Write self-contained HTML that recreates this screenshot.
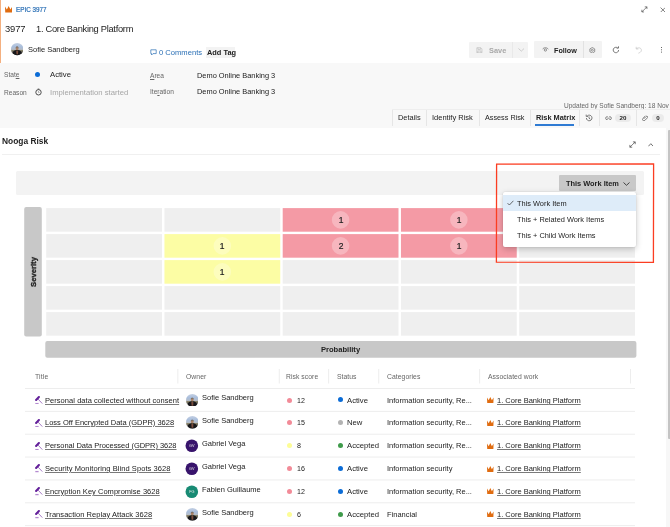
<!DOCTYPE html>
<html>
<head>
<meta charset="utf-8">
<title>Epic 3977</title>
<style>
html,body{margin:0;padding:0;}
body{width:670px;height:527px;position:relative;overflow:hidden;background:#fff;font-family:"Liberation Sans",sans-serif;color:#222;}
.a{position:absolute;}
.t{position:absolute;white-space:nowrap;will-change:transform;line-height:12px;height:12px;font-size:8px;color:#222;}
.b{font-weight:bold;}
.g{color:#666;}
.u{text-decoration:underline;text-decoration-thickness:0.5px;text-underline-offset:1px;text-decoration-color:rgba(40,40,40,0.62);}
.dot{position:absolute;width:5px;height:5px;border-radius:50%;}
</style>
</head>
<body>
<!-- header -->
<div class="a" style="left:0;top:0;width:1.2px;height:62.8px;background:#f4b080;"></div>
<div class="a" id="greyband" style="left:0;top:62.8px;width:670px;height:65px;background:#f8f8f8;"></div>

<svg class="a" style="left:4.9px;top:6.4px" width="7.3" height="6.6" viewBox="0 0 7.4 6.6"><path d="M0 0.4 L0.25 6.6 H7.15 L7.4 0.4 L5.5 3.5 L3.7 0 L1.9 3.5 Z" fill="#e06c10"/></svg>
<span class="t" style="left:15.5px;top:3.5px;font-size:6.3px;color:#2a6fb5;-webkit-text-stroke:0.2px #2a6fb5;">EPIC 3977</span>
<span class="t" style="left:5px;top:23.2px;font-size:9.4px;letter-spacing:-0.1px;">3977</span>
<span class="t" style="left:36px;top:23.2px;font-size:9.3px;letter-spacing:-0.28px;">1. Core Banking Platform</span>

<svg class="a" style="left:10.9px;top:43.4px" width="12.4" height="12.4" viewBox="0 0 24 24"><defs><clipPath id="c0"><circle cx="12" cy="12" r="12"/></clipPath><linearGradient id="g0" x1="0" y1="0" x2="0" y2="1"><stop offset="0" stop-color="#c3cfe2"/><stop offset="0.3" stop-color="#a9bedc"/><stop offset="0.52" stop-color="#b4bcc8"/><stop offset="0.58" stop-color="#8c866c"/><stop offset="0.7" stop-color="#6e6a5c"/><stop offset="1" stop-color="#8a8a8a"/></linearGradient></defs><g clip-path="url(#c0)"><rect width="24" height="24" fill="url(#g0)"/><path d="M2.5 22 C3 15.5 7 13.6 12 13.6 C17 13.6 21 15.5 21.5 22 L21.5 24 H2.5 Z" fill="#17171a"/><path d="M10 15 L14 15 L13.6 22 L10.6 22 Z" fill="#7a4d3c"/><ellipse cx="11.8" cy="10.6" rx="2.7" ry="3.6" fill="#a98266"/><path d="M9 9.6 C9 6 14.6 6 14.6 9.6 C13.6 8 10 8 9 9.6 Z" fill="#6c6862"/></g></svg>
<span class="t" style="left:28px;top:43.7px;font-size:7.5px;">Sofie Sandberg</span>

<svg class="a" style="left:150px;top:48.7px" width="7" height="7" viewBox="0 0 7 7"><path d="M0.8 0.8 H6.2 V4.6 H3 L1.6 6 V4.6 H0.8 Z" fill="none" stroke="#2a6fb5" stroke-width="0.7"/></svg>
<span class="t" style="left:159px;top:47px;font-size:7.6px;color:#2a6fb5;">0 Comments</span>
<div class="a" style="left:205.5px;top:47.2px;width:29.5px;height:10.8px;background:#f3f3f3;"></div>
<span class="t b" style="left:206.5px;top:47px;font-size:7.4px;">Add Tag</span>

<!-- toolbar buttons -->
<div class="a" style="left:469px;top:42px;width:59.3px;height:16.1px;background:#f3f3f3;border-radius:1px;"></div>
<div class="a" style="left:512px;top:42px;width:0.8px;height:16.1px;background:#e9e9e9;"></div>
<svg class="a" style="left:476px;top:46.6px" width="6.8" height="6.6" viewBox="0 0 7 7"><path d="M0.8 0.8 H5 L6.2 2 V6.2 H0.8 Z M2 0.8 V2.6 H4.6 V0.8 M1.8 6.2 V4.2 H5.2 V6.2" fill="none" stroke="#b4b4b4" stroke-width="0.6"/></svg>
<span class="t b" style="left:489px;top:44.6px;font-size:7.4px;color:#a8a8a8;">Save</span>
<svg class="a" style="left:517.5px;top:48.4px" width="6.6" height="3.8" viewBox="0 0 7 4"><path d="M0.5 0.5 L3.5 3.3 L6.5 0.5" fill="none" stroke="#b0b0b0" stroke-width="0.6"/></svg>

<div class="a" style="left:534px;top:41.1px;width:67.7px;height:17.3px;background:#f3f3f3;border-radius:1px;"></div>
<div class="a" style="left:583px;top:41.1px;width:0.9px;height:17.3px;background:#e2e2e2;"></div>
<svg class="a" style="left:541.8px;top:47.2px" width="6.8" height="5" viewBox="0 0 6.8 5"><path d="M0.4 2.3 C1.8 0.2 5 0.2 6.4 2.3" fill="none" stroke="#555" stroke-width="0.6"/><circle cx="3.4" cy="3" r="1.15" fill="none" stroke="#555" stroke-width="0.6"/></svg>
<span class="t b" style="left:554px;top:44.6px;font-size:7.2px;">Follow</span>
<svg class="a" style="left:589.4px;top:46.7px" width="6.6" height="6.6" viewBox="0 0 6.6 6.6"><path d="M3.3 0.5 L5.7 1.9 V4.7 L3.3 6.1 L0.9 4.7 V1.9 Z" fill="none" stroke="#555" stroke-width="0.6" stroke-linejoin="round"/><circle cx="3.3" cy="3.3" r="1" fill="none" stroke="#555" stroke-width="0.55"/></svg>
<svg class="a" style="left:612px;top:46.1px" width="8" height="8" viewBox="0 0 8 8"><path d="M6.6 4 A2.7 2.7 0 1 1 5.6 1.9" fill="none" stroke="#444" stroke-width="0.7"/><path d="M4.6 2.1 H6.5 V0.3" fill="none" stroke="#444" stroke-width="0.7"/></svg>
<svg class="a" style="left:635px;top:46.1px" width="8" height="8" viewBox="0 0 8 8"><path d="M1.2 0.8 V3 H3.4 M1.3 3 C2.6 1.2 6.4 1.4 6.4 4.2 C6.4 6 4.6 6.6 3.4 7.2" fill="none" stroke="#c4c4c4" stroke-width="0.7"/></svg>
<div class="a" style="left:660.7px;top:47px;width:1px;height:1px;background:#666;box-shadow:0 2.3px 0 #666,0 4.6px 0 #666;"></div>

<!-- window controls -->
<svg class="a" style="left:641.2px;top:6px" width="6.8" height="6.8" viewBox="0 0 8 8"><path d="M1 7 L7 1 M4.4 1 H7 V3.6 M1 4.4 V7 H3.6" fill="none" stroke="#444" stroke-width="0.75"/></svg>
<svg class="a" style="left:659.6px;top:6.6px" width="5.8" height="5.8" viewBox="0 0 7 7"><path d="M0.7 0.7 L6.3 6.3 M6.3 0.7 L0.7 6.3" fill="none" stroke="#444" stroke-width="0.8"/></svg>

<!-- fields -->
<span class="t g" style="left:4px;top:69.1px;font-size:6.6px;">Stat<u>e</u></span>
<div class="dot" style="left:34.6px;top:72.2px;background:#0b6cd6;"></div>
<span class="t" style="left:49.5px;top:69.1px;font-size:7.7px;">Active</span>
<span class="t g" style="left:4px;top:87px;font-size:6.6px;">Reason</span>
<svg class="a" style="left:35px;top:88px" width="7" height="8" viewBox="0 0 7 8"><circle cx="3.5" cy="4.3" r="2.7" fill="none" stroke="#444" stroke-width="0.95"/><path d="M2.7 1.1 H4.3" fill="none" stroke="#444" stroke-width="0.9"/><path d="M3.5 3 V4.5 H4.5" fill="none" stroke="#777" stroke-width="0.55"/></svg>
<span class="t" style="left:49.5px;top:87.4px;font-size:7.7px;color:#a6a6a6;">Implementation started</span>

<span class="t g" style="left:150px;top:69.7px;font-size:6.6px;"><u>A</u>rea</span>
<span class="t" style="left:197px;top:69.7px;font-size:7.41px;">Demo Online Banking 3</span>
<span class="t g" style="left:150px;top:85.5px;font-size:6.6px;">Ite<u>r</u>ation</span>
<span class="t" style="left:197px;top:85.5px;font-size:7.41px;">Demo Online Banking 3</span>

<span class="t g" style="right:1px;top:100px;font-size:6.55px;">Updated by Sofie Sandberg: 18 Nov</span>

<!-- tabs -->
<div class="a" style="left:391.5px;top:109.5px;width:1px;height:16px;background:#e6e6e6;"></div>
<div class="a" style="left:426px;top:109.5px;width:1px;height:16px;background:#e6e6e6;"></div>
<div class="a" style="left:479px;top:109.5px;width:1px;height:16px;background:#e6e6e6;"></div>
<div class="a" style="left:530.2px;top:109.5px;width:1px;height:16px;background:#e6e6e6;"></div>
<div class="a" style="left:578.8px;top:109.5px;width:1px;height:16px;background:#e6e6e6;"></div>
<div class="a" style="left:599px;top:109.5px;width:1px;height:16px;background:#e6e6e6;"></div>
<div class="a" style="left:635.7px;top:109.5px;width:1px;height:16px;background:#e6e6e6;"></div>
<div class="a" style="left:392px;top:109px;width:278px;height:1px;background:#eeeeee;"></div>
<span class="t" style="left:398.4px;top:112px;font-size:7.4px;">Details</span>
<span class="t" style="left:432.3px;top:112px;font-size:7.5px;">Identify Risk</span>
<span class="t" style="left:485.3px;top:112px;font-size:7.25px;">Assess Risk</span>
<span class="t b" style="left:535.5px;top:112px;font-size:7.36px;">Risk Matrix</span>
<div class="a" style="left:535.4px;top:124.3px;width:38.6px;height:1.4px;background:#2f7bd3;"></div>
<svg class="a" style="left:585px;top:114px" width="8" height="8" viewBox="0 0 8 8"><path d="M1.4 4 A2.8 2.8 0 1 0 2.3 1.9" fill="none" stroke="#444" stroke-width="0.7"/><path d="M1.2 0.6 V2.4 H3 M4 2.4 V4.2 L5.2 5" fill="none" stroke="#444" stroke-width="0.7"/></svg>
<svg class="a" style="left:604.7px;top:115.8px" width="7" height="4.4" viewBox="0 0 8 5"><path d="M3.2 0.8 H2.4 A1.7 1.7 0 0 0 2.4 4.2 H3.2 M4.8 0.8 H5.6 A1.7 1.7 0 0 1 5.6 4.2 H4.8 M2.6 2.5 H5.4" fill="none" stroke="#444" stroke-width="0.7"/></svg>
<div class="a" style="left:615.2px;top:113.5px;width:16px;height:8.5px;border-radius:4.3px;background:#ebebeb;"></div>
<span class="t b" style="left:615.2px;width:16px;text-align:center;top:111.8px;font-size:6.2px;">20</span>
<svg class="a" style="left:641.8px;top:114.5px" width="6.6" height="6.6" viewBox="0 0 8 8"><path d="M2.2 4.6 L5 1.8 A1.1 1.1 0 0 1 6.6 3.4 L3.4 6.6 A1.7 1.7 0 0 1 1 4.2 L4 1.2" fill="none" stroke="#444" stroke-width="0.8"/></svg>
<div class="a" style="left:651.8px;top:113.5px;width:12px;height:8.5px;border-radius:4.3px;background:#ebebeb;"></div>
<span class="t b" style="left:651.8px;width:12px;text-align:center;top:111.8px;font-size:6.2px;">0</span>

<!-- section -->
<span class="t b" style="left:2px;top:135px;font-size:8.4px;">Nooga Risk</span>
<svg class="a" style="left:629.2px;top:141.4px" width="7.1" height="7.1" viewBox="0 0 8 8"><path d="M1 7 L7 1 M4.4 1 H7 V3.6 M1 4.4 V7 H3.6" fill="none" stroke="#444" stroke-width="0.8"/></svg>
<svg class="a" style="left:647.8px;top:143px" width="5.6" height="3.6" viewBox="0 0 5.6 3.6"><path d="M0.4 3.3 L2.8 0.7 L5.2 3.3" fill="none" stroke="#444" stroke-width="0.75"/></svg>
<div class="a" style="left:2px;top:154.2px;width:657.6px;height:1px;background:#f0f0f0;"></div>

<div class="a" id="filterbar" style="left:16px;top:171px;width:628.3px;height:24px;background:#f3f3f3;border-radius:1.5px;"></div>

<!-- matrix -->
<svg class="a" style="left:0;top:0" width="670" height="527" viewBox="0 0 670 527">
<rect x="24.2" y="207" width="17.6" height="129.5" rx="2" fill="#c8c8c8"/>
<rect x="45.3" y="341.1" width="591.1" height="16.7" rx="2" fill="#c8c8c8"/>
<rect x="46.20" y="208.10" width="115.8" height="23.6" fill="#efefef"/>
<rect x="164.45" y="208.10" width="115.8" height="23.6" fill="#efefef"/>
<rect x="282.70" y="208.10" width="115.8" height="23.6" fill="#f49aa5"/>
<circle cx="340.60" cy="219.90" r="8.8" fill="#fff" fill-opacity="0.28"/>
<rect x="400.95" y="208.10" width="115.8" height="23.6" fill="#f49aa5"/>
<circle cx="458.85" cy="219.90" r="8.8" fill="#fff" fill-opacity="0.28"/>
<rect x="519.20" y="208.10" width="115.8" height="23.6" fill="#efefef"/>
<rect x="46.20" y="234.10" width="115.8" height="23.6" fill="#efefef"/>
<rect x="164.45" y="234.10" width="115.8" height="23.6" fill="#fcfda4"/>
<circle cx="222.35" cy="245.90" r="8.8" fill="#fff" fill-opacity="0.28"/>
<rect x="282.70" y="234.10" width="115.8" height="23.6" fill="#f49aa5"/>
<circle cx="340.60" cy="245.90" r="8.8" fill="#fff" fill-opacity="0.28"/>
<rect x="400.95" y="234.10" width="115.8" height="23.6" fill="#f49aa5"/>
<circle cx="458.85" cy="245.90" r="8.8" fill="#fff" fill-opacity="0.28"/>
<rect x="519.20" y="234.10" width="115.8" height="23.6" fill="#efefef"/>
<rect x="46.20" y="260.10" width="115.8" height="23.6" fill="#efefef"/>
<rect x="164.45" y="260.10" width="115.8" height="23.6" fill="#fcfda4"/>
<circle cx="222.35" cy="271.90" r="8.8" fill="#fff" fill-opacity="0.28"/>
<rect x="282.70" y="260.10" width="115.8" height="23.6" fill="#efefef"/>
<rect x="400.95" y="260.10" width="115.8" height="23.6" fill="#efefef"/>
<rect x="519.20" y="260.10" width="115.8" height="23.6" fill="#efefef"/>
<rect x="46.20" y="286.10" width="115.8" height="23.6" fill="#efefef"/>
<rect x="164.45" y="286.10" width="115.8" height="23.6" fill="#efefef"/>
<rect x="282.70" y="286.10" width="115.8" height="23.6" fill="#efefef"/>
<rect x="400.95" y="286.10" width="115.8" height="23.6" fill="#efefef"/>
<rect x="519.20" y="286.10" width="115.8" height="23.6" fill="#efefef"/>
<rect x="46.20" y="312.10" width="115.8" height="23.6" fill="#efefef"/>
<rect x="164.45" y="312.10" width="115.8" height="23.6" fill="#efefef"/>
<rect x="282.70" y="312.10" width="115.8" height="23.6" fill="#efefef"/>
<rect x="400.95" y="312.10" width="115.8" height="23.6" fill="#efefef"/>
<rect x="519.20" y="312.10" width="115.8" height="23.6" fill="#efefef"/>
</svg>
<span class="t" style="left:330.6px;width:20px;text-align:center;top:213.9px;font-size:8.5px;-webkit-text-stroke:0.2px #222;">1</span>
<span class="t" style="left:448.8px;width:20px;text-align:center;top:213.9px;font-size:8.5px;-webkit-text-stroke:0.2px #222;">1</span>
<span class="t" style="left:212.3px;width:20px;text-align:center;top:239.9px;font-size:8.5px;-webkit-text-stroke:0.2px #222;">1</span>
<span class="t" style="left:330.6px;width:20px;text-align:center;top:239.9px;font-size:8.5px;-webkit-text-stroke:0.2px #222;">2</span>
<span class="t" style="left:448.8px;width:20px;text-align:center;top:239.9px;font-size:8.5px;-webkit-text-stroke:0.2px #222;">1</span>
<span class="t" style="left:212.3px;width:20px;text-align:center;top:265.9px;font-size:8.5px;-webkit-text-stroke:0.2px #222;">1</span>
<span class="t b" style="left:33.9px;top:272px;font-size:7.7px;-webkit-text-stroke:0.3px #222;transform:translate(-50%,-50%) rotate(-90deg);">Severity</span>






<span class="t b" style="left:45px;width:591px;text-align:center;top:344px;font-size:7.6px;">Probability</span>

<!-- dropdown -->
<div class="a" id="ddbtn" style="left:559px;top:175px;width:77px;height:16px;background:#c8c8c8;border-radius:1px;"></div>
<span class="t b" style="left:565.5px;top:177.9px;font-size:7.4px;">This Work Item</span>
<svg class="a" style="left:622.5px;top:181.8px" width="7" height="4" viewBox="0 0 7 4"><path d="M0.5 0.5 L3.5 3.3 L6.5 0.5" fill="none" stroke="#333" stroke-width="0.9"/></svg>

<div class="a" id="ddpop" style="left:503px;top:191.8px;width:133px;height:55px;background:#fff;border-radius:2px;box-shadow:0 2px 6px rgba(0,0,0,0.22),0 0 2px rgba(0,0,0,0.12);"></div>
<div class="a" style="left:503px;top:195px;width:133px;height:16.4px;background:#deecf9;"></div>
<svg class="a" style="left:507px;top:200px" width="7" height="6" viewBox="0 0 7 6"><path d="M0.6 3.2 L2.4 5 L6.4 0.8" fill="none" stroke="#444" stroke-width="0.8"/></svg>
<span class="t" style="left:516.5px;top:198.3px;font-size:7.4px;">This Work Item</span>
<span class="t" style="left:516.5px;top:214.3px;font-size:7.4px;">This + Related Work Items</span>
<span class="t" style="left:516.5px;top:230.3px;font-size:7.4px;">This + Child Work Items</span>

<!-- red annotation -->
<svg class="a" style="left:494px;top:161px" width="164" height="106" viewBox="0 0 164 106"><defs><filter id="rough" x="-2%" y="-2%" width="104%" height="104%"><feTurbulence type="fractalNoise" baseFrequency="0.55" numOctaves="2" seed="3" result="n"/><feDisplacementMap in="SourceGraphic" in2="n" scale="0.9" xChannelSelector="R" yChannelSelector="G"/></filter></defs><path d="M2.6 3.2 L159.6 2.8 L159.4 101.4 L2.4 101.2 Z" fill="none" stroke="#fb3c20" stroke-width="1.3" filter="url(#rough)"/></svg>

<!-- table -->
<span class="t g" style="left:35px;top:371px;font-size:6.8px;letter-spacing:0.15px;">Title</span>
<span class="t g" style="left:186px;top:371px;font-size:6.8px;letter-spacing:0.05px;">Owner</span>
<span class="t g" style="left:286px;top:371px;font-size:6.8px;letter-spacing:0.05px;">Risk score</span>
<span class="t g" style="left:337px;top:371px;font-size:6.8px;letter-spacing:0.05px;">Status</span>
<span class="t g" style="left:387px;top:371px;font-size:6.8px;letter-spacing:0.05px;">Categories</span>
<span class="t g" style="left:487.5px;top:371px;font-size:6.8px;letter-spacing:0.05px;">Associated work</span>


<svg class="a" style="left:0;top:0" width="670" height="527" viewBox="0 0 670 527"><rect x="177.4" y="369" width="0.9" height="14.5" fill="#ebebeb"/><rect x="278.8" y="369" width="0.9" height="14.5" fill="#ebebeb"/><rect x="328.2" y="369" width="0.9" height="14.5" fill="#ebebeb"/><rect x="378.3" y="369" width="0.9" height="14.5" fill="#ebebeb"/><rect x="479.2" y="369" width="0.9" height="14.5" fill="#ebebeb"/><rect x="630.0" y="369" width="0.9" height="14.5" fill="#ebebeb"/><rect x="25" y="388.00" width="610" height="0.9" fill="#ebebeb"/><rect x="25" y="410.87" width="610" height="0.9" fill="#ebebeb"/><rect x="25" y="433.74" width="610" height="0.9" fill="#ebebeb"/><rect x="25" y="456.61" width="610" height="0.9" fill="#ebebeb"/><rect x="25" y="479.48" width="610" height="0.9" fill="#ebebeb"/><rect x="25" y="502.35" width="610" height="0.9" fill="#ebebeb"/><rect x="25" y="525.22" width="610" height="0.9" fill="#ebebeb"/></svg>
<!-- scrollbar -->
<div class="a" style="left:666.2px;top:127.8px;width:3.8px;height:400px;background:#f7f7f7;"></div>
<div class="a" style="left:667.8px;top:129.7px;width:2.2px;height:309.1px;background:#c4c4c4;border-radius:1px 0 0 1px;"></div>

<div id="rows">
<!-- row 1 -->
<svg class="a" style="left:34.5px;top:395.8px" width="8" height="8.4" viewBox="0 0 8 8.4"><path d="M1.1 3.9 L3.9 1.1" stroke="#63209a" stroke-width="2.1" stroke-linecap="round" fill="none"/><path d="M3 3 L7.3 7.6" stroke="#a274c2" stroke-width="0.95" fill="none"/><path d="M0.3 7.6 H3.6" stroke="#b48ad0" stroke-width="1.3" fill="none"/></svg>
<span class="t u" style="left:45px;top:394.5px;font-size:7.5px;letter-spacing:0.05px;">Personal data collected without consent</span>
<svg class="a" style="left:185.5px;top:393.5px" width="12.7" height="12.7" viewBox="0 0 24 24"><defs><clipPath id="c1"><circle cx="12" cy="12" r="12"/></clipPath><linearGradient id="g1" x1="0" y1="0" x2="0" y2="1"><stop offset="0" stop-color="#c3cfe2"/><stop offset="0.3" stop-color="#a9bedc"/><stop offset="0.52" stop-color="#b4bcc8"/><stop offset="0.58" stop-color="#8c866c"/><stop offset="0.7" stop-color="#6e6a5c"/><stop offset="1" stop-color="#8a8a8a"/></linearGradient></defs><g clip-path="url(#c1)"><rect width="24" height="24" fill="url(#g1)"/><path d="M2.5 22 C3 15.5 7 13.6 12 13.6 C17 13.6 21 15.5 21.5 22 L21.5 24 H2.5 Z" fill="#17171a"/><path d="M10 15 L14 15 L13.6 22 L10.6 22 Z" fill="#7a4d3c"/><ellipse cx="11.8" cy="10.6" rx="2.7" ry="3.6" fill="#a98266"/><path d="M9 9.6 C9 6 14.6 6 14.6 9.6 C13.6 8 10 8 9 9.6 Z" fill="#6c6862"/></g></svg>
<span class="t" style="left:201.9px;top:392.3px;font-size:7.5px;">Sofie Sandberg</span>
<div class="dot" style="left:287px;top:397.5px;background:#f28b98;"></div>
<span class="t" style="left:297px;top:394.5px;font-size:7.1px;">12</span>
<div class="dot" style="left:337.5px;top:397.1px;background:#0b6cd6;"></div>
<span class="t" style="left:347px;top:394.5px;font-size:7.7px;">Active</span>
<span class="t" style="left:387px;top:394.5px;font-size:7.5px;">Information security, Re...</span>
<svg class="a" style="left:487.4px;top:396.9px" width="6.6" height="6" viewBox="0 0 7.4 6.6"><path d="M0 0.4 L0.25 6.6 H7.15 L7.4 0.4 L5.5 3.5 L3.7 0 L1.9 3.5 Z" fill="#e06c10"/></svg>
<span class="t u" style="left:497px;top:394.5px;font-size:7.5px;">1. Core Banking Platform</span>
<!-- row 2 -->
<svg class="a" style="left:34.5px;top:418.7px" width="8" height="8.4" viewBox="0 0 8 8.4"><path d="M1.1 3.9 L3.9 1.1" stroke="#63209a" stroke-width="2.1" stroke-linecap="round" fill="none"/><path d="M3 3 L7.3 7.6" stroke="#a274c2" stroke-width="0.95" fill="none"/><path d="M0.3 7.6 H3.6" stroke="#b48ad0" stroke-width="1.3" fill="none"/></svg>
<span class="t u" style="left:45px;top:417.4px;font-size:7.5px;letter-spacing:0px;">Loss Off Encrypted Data (GDPR) 3628</span>
<svg class="a" style="left:185.5px;top:416.4px" width="12.7" height="12.7" viewBox="0 0 24 24"><defs><clipPath id="c2"><circle cx="12" cy="12" r="12"/></clipPath><linearGradient id="g2" x1="0" y1="0" x2="0" y2="1"><stop offset="0" stop-color="#c3cfe2"/><stop offset="0.3" stop-color="#a9bedc"/><stop offset="0.52" stop-color="#b4bcc8"/><stop offset="0.58" stop-color="#8c866c"/><stop offset="0.7" stop-color="#6e6a5c"/><stop offset="1" stop-color="#8a8a8a"/></linearGradient></defs><g clip-path="url(#c2)"><rect width="24" height="24" fill="url(#g2)"/><path d="M2.5 22 C3 15.5 7 13.6 12 13.6 C17 13.6 21 15.5 21.5 22 L21.5 24 H2.5 Z" fill="#17171a"/><path d="M10 15 L14 15 L13.6 22 L10.6 22 Z" fill="#7a4d3c"/><ellipse cx="11.8" cy="10.6" rx="2.7" ry="3.6" fill="#a98266"/><path d="M9 9.6 C9 6 14.6 6 14.6 9.6 C13.6 8 10 8 9 9.6 Z" fill="#6c6862"/></g></svg>
<span class="t" style="left:201.9px;top:415.2px;font-size:7.5px;">Sofie Sandberg</span>
<div class="dot" style="left:287px;top:420.4px;background:#f28b98;"></div>
<span class="t" style="left:297px;top:417.4px;font-size:7.1px;">15</span>
<div class="dot" style="left:337.5px;top:420.0px;background:#b3b3b3;"></div>
<span class="t" style="left:347px;top:417.4px;font-size:7.7px;">New</span>
<span class="t" style="left:387px;top:417.4px;font-size:7.5px;">Information security, Re...</span>
<svg class="a" style="left:487.4px;top:419.8px" width="6.6" height="6" viewBox="0 0 7.4 6.6"><path d="M0 0.4 L0.25 6.6 H7.15 L7.4 0.4 L5.5 3.5 L3.7 0 L1.9 3.5 Z" fill="#e06c10"/></svg>
<span class="t u" style="left:497px;top:417.4px;font-size:7.5px;">1. Core Banking Platform</span>
<!-- row 3 -->
<svg class="a" style="left:34.5px;top:441.6px" width="8" height="8.4" viewBox="0 0 8 8.4"><path d="M1.1 3.9 L3.9 1.1" stroke="#63209a" stroke-width="2.1" stroke-linecap="round" fill="none"/><path d="M3 3 L7.3 7.6" stroke="#a274c2" stroke-width="0.95" fill="none"/><path d="M0.3 7.6 H3.6" stroke="#b48ad0" stroke-width="1.3" fill="none"/></svg>
<span class="t u" style="left:45px;top:440.3px;font-size:7.5px;letter-spacing:-0.03px;">Personal Data Processed (GDPR) 3628</span>
<svg class="a" style="left:185px;top:438.8px" width="14" height="14" viewBox="0 0 14 14"><circle cx="6.8" cy="6.7" r="6.3" fill="#38146c"/><text x="6.8" y="8" font-size="3.8" font-family="Liberation Sans, sans-serif" fill="#e6e6e6" text-anchor="middle">GV</text></svg>
<span class="t" style="left:201.9px;top:438.1px;font-size:7.5px;">Gabriel Vega</span>
<div class="dot" style="left:287px;top:443.3px;background:#fdfd96;"></div>
<span class="t" style="left:297px;top:440.3px;font-size:7.1px;">8</span>
<div class="dot" style="left:337.5px;top:442.9px;background:#3f9b4b;"></div>
<span class="t" style="left:347px;top:440.3px;font-size:7.7px;">Accepted</span>
<span class="t" style="left:387px;top:440.3px;font-size:7.5px;">Information security, Re...</span>
<svg class="a" style="left:487.4px;top:442.7px" width="6.6" height="6" viewBox="0 0 7.4 6.6"><path d="M0 0.4 L0.25 6.6 H7.15 L7.4 0.4 L5.5 3.5 L3.7 0 L1.9 3.5 Z" fill="#e06c10"/></svg>
<span class="t u" style="left:497px;top:440.3px;font-size:7.5px;">1. Core Banking Platform</span>
<!-- row 4 -->
<svg class="a" style="left:34.5px;top:464.4px" width="8" height="8.4" viewBox="0 0 8 8.4"><path d="M1.1 3.9 L3.9 1.1" stroke="#63209a" stroke-width="2.1" stroke-linecap="round" fill="none"/><path d="M3 3 L7.3 7.6" stroke="#a274c2" stroke-width="0.95" fill="none"/><path d="M0.3 7.6 H3.6" stroke="#b48ad0" stroke-width="1.3" fill="none"/></svg>
<span class="t u" style="left:45px;top:463.1px;font-size:7.5px;letter-spacing:0.07px;">Security Monitoring Blind Spots 3628</span>
<svg class="a" style="left:185px;top:461.6px" width="14" height="14" viewBox="0 0 14 14"><circle cx="6.8" cy="6.7" r="6.3" fill="#38146c"/><text x="6.8" y="8" font-size="3.8" font-family="Liberation Sans, sans-serif" fill="#e6e6e6" text-anchor="middle">GV</text></svg>
<span class="t" style="left:201.9px;top:460.9px;font-size:7.5px;">Gabriel Vega</span>
<div class="dot" style="left:287px;top:466.1px;background:#f28b98;"></div>
<span class="t" style="left:297px;top:463.1px;font-size:7.1px;">16</span>
<div class="dot" style="left:337.5px;top:465.7px;background:#0b6cd6;"></div>
<span class="t" style="left:347px;top:463.1px;font-size:7.7px;">Active</span>
<span class="t" style="left:387px;top:463.1px;font-size:7.5px;">Information security</span>
<svg class="a" style="left:487.4px;top:465.5px" width="6.6" height="6" viewBox="0 0 7.4 6.6"><path d="M0 0.4 L0.25 6.6 H7.15 L7.4 0.4 L5.5 3.5 L3.7 0 L1.9 3.5 Z" fill="#e06c10"/></svg>
<span class="t u" style="left:497px;top:463.1px;font-size:7.5px;">1. Core Banking Platform</span>
<!-- row 5 -->
<svg class="a" style="left:34.5px;top:487.3px" width="8" height="8.4" viewBox="0 0 8 8.4"><path d="M1.1 3.9 L3.9 1.1" stroke="#63209a" stroke-width="2.1" stroke-linecap="round" fill="none"/><path d="M3 3 L7.3 7.6" stroke="#a274c2" stroke-width="0.95" fill="none"/><path d="M0.3 7.6 H3.6" stroke="#b48ad0" stroke-width="1.3" fill="none"/></svg>
<span class="t u" style="left:45px;top:486.0px;font-size:7.5px;letter-spacing:0.03px;">Encryption Key Compromise 3628</span>
<svg class="a" style="left:185px;top:484.5px" width="14" height="14" viewBox="0 0 14 14"><circle cx="6.8" cy="6.7" r="6.3" fill="#188b74"/><text x="6.8" y="8" font-size="3.8" font-family="Liberation Sans, sans-serif" fill="#e6e6e6" text-anchor="middle">FG</text></svg>
<span class="t" style="left:201.9px;top:483.8px;font-size:7.5px;">Fabien Guillaume</span>
<div class="dot" style="left:287px;top:489.0px;background:#f28b98;"></div>
<span class="t" style="left:297px;top:486.0px;font-size:7.1px;">12</span>
<div class="dot" style="left:337.5px;top:488.6px;background:#0b6cd6;"></div>
<span class="t" style="left:347px;top:486.0px;font-size:7.7px;">Active</span>
<span class="t" style="left:387px;top:486.0px;font-size:7.5px;">Information security, Re...</span>
<svg class="a" style="left:487.4px;top:488.4px" width="6.6" height="6" viewBox="0 0 7.4 6.6"><path d="M0 0.4 L0.25 6.6 H7.15 L7.4 0.4 L5.5 3.5 L3.7 0 L1.9 3.5 Z" fill="#e06c10"/></svg>
<span class="t u" style="left:497px;top:486.0px;font-size:7.5px;">1. Core Banking Platform</span>
<!-- row 6 -->
<svg class="a" style="left:34.5px;top:510.2px" width="8" height="8.4" viewBox="0 0 8 8.4"><path d="M1.1 3.9 L3.9 1.1" stroke="#63209a" stroke-width="2.1" stroke-linecap="round" fill="none"/><path d="M3 3 L7.3 7.6" stroke="#a274c2" stroke-width="0.95" fill="none"/><path d="M0.3 7.6 H3.6" stroke="#b48ad0" stroke-width="1.3" fill="none"/></svg>
<span class="t u" style="left:45px;top:508.9px;font-size:7.5px;letter-spacing:0.05px;">Transaction Replay Attack 3628</span>
<svg class="a" style="left:185.5px;top:507.9px" width="12.7" height="12.7" viewBox="0 0 24 24"><defs><clipPath id="c6"><circle cx="12" cy="12" r="12"/></clipPath><linearGradient id="g6" x1="0" y1="0" x2="0" y2="1"><stop offset="0" stop-color="#c3cfe2"/><stop offset="0.3" stop-color="#a9bedc"/><stop offset="0.52" stop-color="#b4bcc8"/><stop offset="0.58" stop-color="#8c866c"/><stop offset="0.7" stop-color="#6e6a5c"/><stop offset="1" stop-color="#8a8a8a"/></linearGradient></defs><g clip-path="url(#c6)"><rect width="24" height="24" fill="url(#g6)"/><path d="M2.5 22 C3 15.5 7 13.6 12 13.6 C17 13.6 21 15.5 21.5 22 L21.5 24 H2.5 Z" fill="#17171a"/><path d="M10 15 L14 15 L13.6 22 L10.6 22 Z" fill="#7a4d3c"/><ellipse cx="11.8" cy="10.6" rx="2.7" ry="3.6" fill="#a98266"/><path d="M9 9.6 C9 6 14.6 6 14.6 9.6 C13.6 8 10 8 9 9.6 Z" fill="#6c6862"/></g></svg>
<span class="t" style="left:201.9px;top:506.7px;font-size:7.5px;">Sofie Sandberg</span>
<div class="dot" style="left:287px;top:511.9px;background:#fdfd96;"></div>
<span class="t" style="left:297px;top:508.9px;font-size:7.1px;">6</span>
<div class="dot" style="left:337.5px;top:511.5px;background:#3f9b4b;"></div>
<span class="t" style="left:347px;top:508.9px;font-size:7.7px;">Accepted</span>
<span class="t" style="left:387px;top:508.9px;font-size:7.5px;">Financial</span>
<svg class="a" style="left:487.4px;top:511.3px" width="6.6" height="6" viewBox="0 0 7.4 6.6"><path d="M0 0.4 L0.25 6.6 H7.15 L7.4 0.4 L5.5 3.5 L3.7 0 L1.9 3.5 Z" fill="#e06c10"/></svg>
<span class="t u" style="left:497px;top:508.9px;font-size:7.5px;">1. Core Banking Platform</span>
</div><!--endrows-->
</body>
</html>
